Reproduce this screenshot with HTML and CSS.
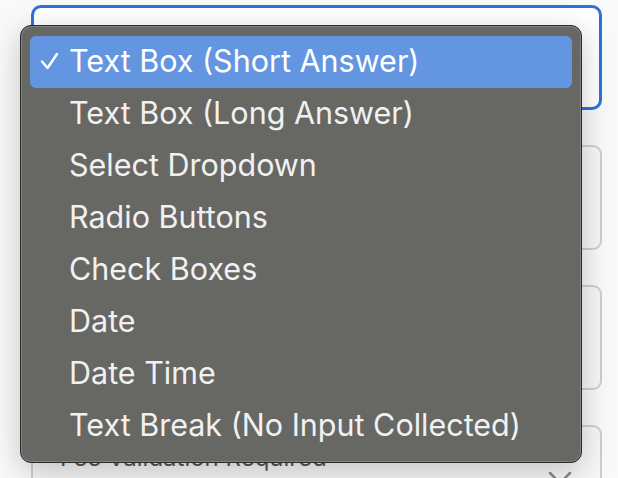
FILE: index.html
```html
<!DOCTYPE html>
<html lang="en">
<head>
    <meta charset="UTF-8">
    <title>Field Type</title>
    <link rel="stylesheet" href="styles.css">
</head>
<body>
    <div class="form">
        <!-- Field type select (focused) -->
        <div class="field field-focused"></div>
        <div class="field"></div>
        <div class="field"></div>
        <div class="field field-select">
            <span class="select-value">Fee Validation Required</span>
            <svg class="chevron" width="24" height="14" viewBox="0 0 24 14">
                <polyline points="2,2 12,12 22,2" fill="none" stroke="#8a8a8a" stroke-width="2.5" stroke-linecap="round" stroke-linejoin="round"/>
            </svg>
        </div>

        <!-- Open dropdown menu -->
        <ul class="menu">
            <li class="menu-item selected">
                <svg class="check" width="19" height="18" viewBox="0 0 19 18">
                    <polyline points="2,9.5 7.5,16 17,2" fill="none" stroke="#fff" stroke-width="2.4" stroke-linecap="round" stroke-linejoin="round"/>
                </svg>
                Text Box (Short Answer)
            </li>
            <li class="menu-item">Text Box (Long Answer)</li>
            <li class="menu-item">Select Dropdown</li>
            <li class="menu-item">Radio Buttons</li>
            <li class="menu-item">Check Boxes</li>
            <li class="menu-item">Date</li>
            <li class="menu-item">Date Time</li>
            <li class="menu-item">Text Break (No Input Collected)</li>
        </ul>
    </div>
</body>
</html>
```

FILE: styles.css
```css
/* Global Styles */
body, html {
    margin: 0;
    padding: 0;
    background: #f9f9f9;
    font-family: 'Inter', 'Liberation Sans', sans-serif;
    overflow: hidden;
}

.form {
    position: relative;
    height: 478px;
    box-sizing: border-box;
    overflow: hidden;
    display: flex;
    flex-direction: column;
    gap: 35px;
    padding: 5px 16px 0 31px;
}

/* Form fields behind the menu */
.field {
    flex: none;
    height: 105px;
    box-sizing: border-box;
    border: 2px solid #cfcfcf;
    border-radius: 9px;
    background: #f7f7f7;
}

.field-focused {
    border: 3px solid #2f6fde;
    border-radius: 10px;
    background: #fff;
}

.field-select {
    display: flex;
    justify-content: space-between;
    align-items: flex-start;
    padding: 16px 28px 0 27px;
}

.select-value {
    font-size: 24px;
    color: #555;
}

.chevron {
    margin-top: 28px;
}

/* Dropdown menu */
.menu {
    position: absolute;
    top: 25px;
    left: 20px;
    width: 562px;
    box-sizing: border-box;
    margin: 0;
    padding: 10px 9px;
    list-style: none;
    background: #676764;
    border: 1px solid #2b2b2b;
    border-radius: 11px;
    box-shadow: inset 0 0 0 1px rgba(255, 255, 255, 0.18), 0 8px 30px rgba(0, 0, 0, 0.22);
}

.menu-item {
    position: relative;
    height: 52px;
    line-height: 49px;
    padding-left: 39px;
    font-size: 30.5px;
    color: #f1f1f1;
    border-radius: 6px;
    white-space: nowrap;
}

.menu-item.selected {
    background: #6495e1;
    color: #fff;
}

.check {
    position: absolute;
    left: 10px;
    top: 16px;
}
```
